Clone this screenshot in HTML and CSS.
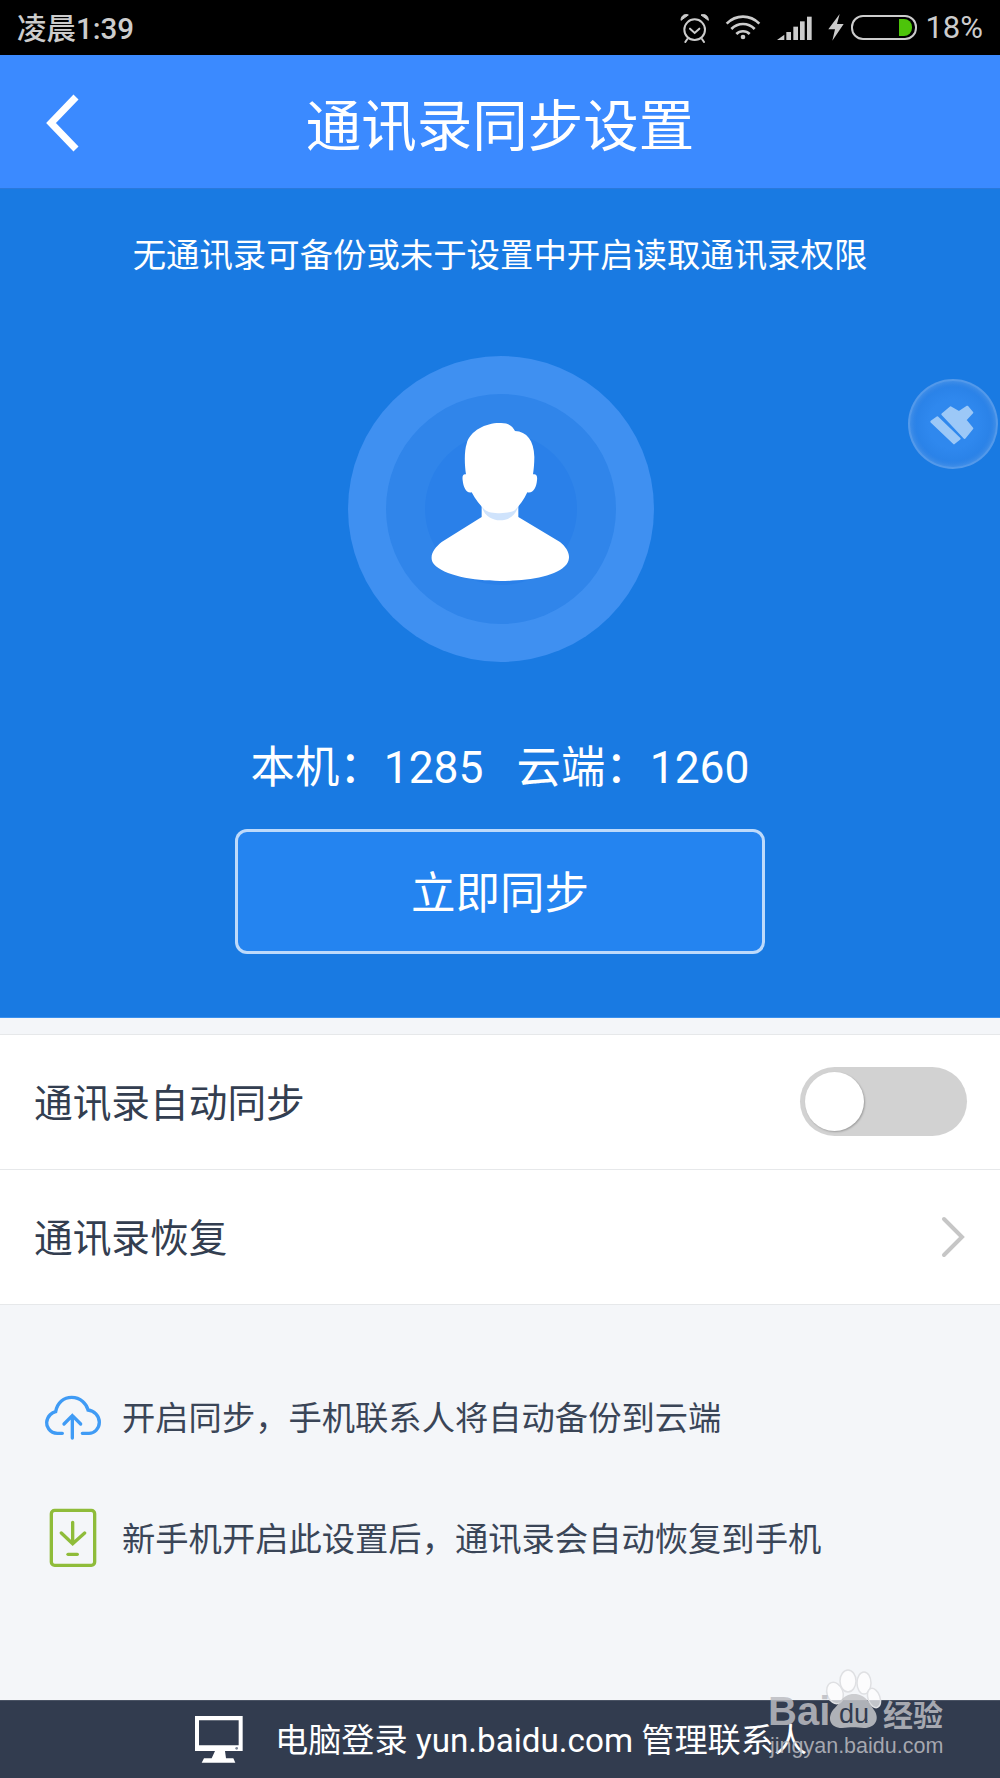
FILE: index.html
```html
<!DOCTYPE html>
<html lang="zh-CN">
<head>
    <meta charset="UTF-8">
    <meta name="viewport" content="width=device-width, initial-scale=1.0">
    <title>通讯录同步设置</title>
    <link rel="stylesheet" href="styles.css">
</head>
<body>
    <!-- Status bar -->
    <div class="status-bar">
        <span class="status-time">凌晨1:39</span>
        <div class="status-icons">
            <svg class="icon-alarm" width="30" height="30" viewBox="30 38 90 90" fill="none" stroke="#ccc" stroke-width="6">
                <circle cx="74" cy="88" r="31"/>
                <path d="M60 85 L74 98 L88 85" stroke-linecap="round"/>
                <path d="M33 60 C33 45 45 40 55 44 Z M115 60 C115 45 103 40 93 44 Z" fill="#ccc" stroke-width="3"/>
                <path d="M52 116 L46 125 M96 116 L102 125" stroke-linecap="round"/>
            </svg>
            <svg class="icon-wifi" width="36" height="25" viewBox="165 46 108 75" fill="none" stroke="#ccc" stroke-width="8">
                <path d="M170 72 C198 44 240 44 268 72"/>
                <path d="M184 88 C204 68 234 68 254 88"/>
                <path d="M199 103 C210 92 228 92 239 103"/>
                <circle cx="219" cy="112" r="7" fill="#ccc" stroke="none"/>
            </svg>
            <svg class="icon-signal" width="36" height="24" viewBox="322 48 108 72" fill="#ccc">
                <path d="M322 120 L344 104 V120 Z"/>
                <rect x="350" y="96" width="14" height="24"/>
                <rect x="371" y="80" width="14" height="40"/>
                <rect x="391" y="64" width="14" height="56"/>
                <rect x="412" y="50" width="14" height="70"/>
            </svg>
            <svg class="icon-bolt" width="16" height="27" viewBox="475 42 48 81" fill="#ccc">
                <path d="M510 42 L476 88 L496 88 L488 122 L522 72 L502 72 Z"/>
            </svg>
            <div class="battery"><div class="battery-level"></div></div>
            <span class="status-percent">18%</span>
        </div>
    </div>

    <!-- Title bar -->
    <header class="top-bar">
        <svg class="back-icon" width="34" height="58" viewBox="0 0 34 58" fill="none" stroke="#fff" stroke-width="7">
            <path d="M30 3 L5 29 L30 55"/>
        </svg>
        <h1>通讯录同步设置</h1>
    </header>

    <!-- Blue sync panel -->
    <section class="sync-panel">
        <p class="sync-note">无通讯录可备份或未于设置中开启读取通讯录权限</p>
        <div class="ring-outer">
            <div class="ring-middle">
                <div class="ring-inner">
                    <svg class="avatar" width="140" height="160" viewBox="300 245 420 480">
                        <path fill="#fff" d="M455 490 H565 V530 L690 605 C715 625 725 650 710 672 C680 710 590 722 510 722 C430 722 340 705 312 672 C295 650 310 625 335 605 L455 530 Z"/>
                        <path fill="#cfe3fc" d="M455 495 C465 555 555 555 565 495 Z"/>
                        <path fill="#fff" d="M510 248 C535 247 548 258 555 272 C590 274 612 300 613 350 C613 370 611 390 609 402 C618 400 623 405 621 420 C619 442 610 460 592 456 C582 478 568 496 556 508 C540 522 480 522 464 508 C452 496 436 478 425 456 C408 460 400 440 398 420 C396 405 400 400 408 402 C403 370 403 330 410 310 C420 270 470 247 510 248 Z"/>
                    </svg>
                </div>
            </div>
        </div>
        <p class="sync-count">本机&#xFF1A;1285&nbsp;&nbsp;&nbsp;云端&#xFF1A;1260</p>
        <button class="sync-btn" type="button"><span>立即同步</span></button>
    </section>

    <!-- Floating cleaner button -->
    <div class="float-tool">
        <svg width="90" height="90" viewBox="52 57 270 270" fill="#9cc8f7">
            <path d="M122 185 L140 172 L207 236 L190 250 Z" stroke="#9cc8f7" stroke-width="6" stroke-linejoin="round"/>
            <path d="M155 163 L180 142 L205 156 L230 140 L245 158 L224 180 L245 205 L222 234 Z" stroke="#9cc8f7" stroke-width="6" stroke-linejoin="round"/>
        </svg>
    </div>

    <!-- Settings list -->
    <div class="settings">
        <div class="setting-row">
            <span>通讯录自动同步</span>
            <div class="toggle"><div class="toggle-knob"></div></div>
        </div>
        <div class="setting-row">
            <span>通讯录恢复</span>
            <svg class="chevron" width="24" height="42" viewBox="0 0 24 42" fill="none" stroke="#c6c6c6" stroke-width="4" stroke-linecap="round">
                <path d="M3 3 L21 21 L3 39"/>
            </svg>
        </div>
    </div>

    <!-- Tips -->
    <div class="tips">
        <div class="tip">
            <svg class="tip-icon" width="58" height="47" viewBox="130 40 174 141" fill="none" stroke="#3f9bf5" stroke-width="10" stroke-linecap="round">
                <path d="M185 158 L170 158 C145 158 137 135 138 125 C140 105 155 95 165 93 C170 65 190 50 213 50 C240 50 258 70 262 88 C280 90 296 105 296 125 C296 145 280 158 265 158 L245 158"/>
                <path d="M215 172 V105 M190 130 L215 105 L240 130"/>
            </svg>
            <span>开启同步&#xFF0C;手机联系人将自动备份到云端</span>
        </div>
        <div class="tip">
            <svg class="tip-icon" width="58" height="60" viewBox="133 385 174 180" fill="none" stroke="#8fbc3a" stroke-width="10" stroke-linecap="round">
                <rect x="155" y="392" width="130" height="165" rx="10"/>
                <path d="M219 428 V490 M185 460 L219 492 L255 460"/>
                <path d="M205 524 H233"/>
            </svg>
            <span>新手机开启此设置后&#xFF0C;通讯录会自动恢复到手机</span>
        </div>
    </div>

    <!-- Footer -->
    <footer class="footer-bar">
        <svg class="monitor" width="48" height="47" viewBox="45 45 144 141">
            <path fill="#fff" fill-rule="evenodd" d="M45 45 H188 V150 H135 L138 172 H160 L166 185 H65 L72 172 H95 L105 150 H45 Z M57 58 V133 H176 V58 Z"/>
            <circle cx="170" cy="142" r="4" fill="#7b8494"/>
        </svg>
        <span>电脑登录 yun.baidu.com 管理联系人</span>
    </footer>

    <!-- Site watermark -->
    <svg class="watermark" width="210" height="110" viewBox="0 0 210 110">
        <g fill="#fff" fill-opacity="0.7" stroke="#dfe0e3" stroke-width="1.5">
            <ellipse cx="85" cy="33" rx="8" ry="11" transform="rotate(-20 85 33)"/>
            <ellipse cx="98" cy="21" rx="8" ry="11"/>
            <ellipse cx="114" cy="23" rx="7" ry="11"/>
            <ellipse cx="124" cy="38" rx="6" ry="10" transform="rotate(-20 124 38)"/>
        </g>
        <path d="M104 34 C116 34 120 44 124 50 C130 58 126 68 114 68 C106 67 100 67 92 68 C80 68 77 58 83 50 C90 44 92 34 104 34 Z" fill="#c4c5c9" fill-opacity="0.85"/>
        <text class="wm-bai" x="18" y="65">Bai</text>
        <text class="wm-du" x="89" y="63">du</text>
        <text class="wm-cn" x="133" y="66">经验</text>
        <text class="wm-url" x="20" y="93">jingyan.baidu.com</text>
    </svg>
</body>
</html>
```
FILE: styles.css
```css
* {
    box-sizing: border-box;
}

body {
    position: relative;
    width: 1000px;
    height: 1778px;
    margin: 0;
    overflow: hidden;
    background-color: #f4f6f9;
    font-family: Roboto, "Noto Sans CJK SC", sans-serif;
}

p, h1 {
    margin: 0;
    font-weight: normal;
}

.status-bar {
    display: flex;
    justify-content: space-between;
    align-items: center;
    height: 55px;
    padding: 0 17px;
    background-color: #000;
    color: #ccc;
    font-size: 29.5px;
}

.status-time {
    padding-bottom: 4px;
    font-weight: 500;
}

.status-icons {
    display: flex;
    align-items: center;
}

.icon-wifi {
    margin-left: 15px;
}

.icon-signal {
    margin-left: 16px;
}

.icon-bolt {
    margin-left: 15px;
}

.battery {
    display: flex;
    justify-content: flex-end;
    width: 66px;
    height: 25px;
    margin-left: 7px;
    padding: 2px 3px 2px 0;
    border: 2px solid #ccc;
    border-radius: 12px;
}

.battery-level {
    width: 13px;
    background-color: #4dc40a;
    border-radius: 0 8px 8px 0;
}

.status-percent {
    margin-left: 8px;
    font-size: 31px;
}

.top-bar {
    position: relative;
    display: flex;
    justify-content: center;
    align-items: center;
    height: 134px;
    background-color: #3b8aff;
    border-bottom: 1px solid #2a78dc;
}

.top-bar h1 {
    color: #fff;
    font-size: 55.5px;
}

.back-icon {
    position: absolute;
    left: 46px;
    top: 39px;
}

.sync-panel {
    display: flex;
    flex-direction: column;
    align-items: center;
    height: 829px;
    padding-top: 45px;
    background-color: #197ae2;
    border-bottom: 1px solid #3a90ee;
    color: #fff;
}

.sync-note {
    font-size: 33.4px;
    line-height: 44px;
}

.ring-outer,
.ring-middle,
.ring-inner {
    display: flex;
    justify-content: center;
    align-items: center;
    border-radius: 50%;
}

.ring-outer {
    width: 306px;
    height: 306px;
    margin-top: 78px;
    margin-left: 2px;
    background-color: #3f90f1;
}

.ring-middle {
    width: 230px;
    height: 230px;
    background-color: #3085ea;
}

.ring-inner {
    width: 152px;
    height: 152px;
    background-color: #2a80e9;
}

.avatar {
    flex-shrink: 0;
    margin-top: -14px;
    margin-right: 2px;
}

.sync-count {
    margin-top: 76px;
    font-size: 44.4px;
    line-height: 60px;
}

.sync-btn {
    width: 530px;
    height: 125px;
    margin-top: 31px;
    padding: 0;
    background-color: #2484f0;
    border: 3px solid rgba(255, 255, 255, 0.7);
    border-radius: 12px;
    color: #fff;
    font-family: inherit;
    font-size: 44.5px;
}

.sync-btn span {
    display: block;
    padding-bottom: 4px;
}

.float-tool {
    position: absolute;
    left: 908px;
    top: 379px;
    display: flex;
    width: 90px;
    height: 90px;
    border: 2px solid rgba(255, 255, 255, 0.2);
    border-radius: 50%;
    background: radial-gradient(circle, #2f88ee 40%, #2279de 100%);
    box-shadow: inset 0 0 6px rgba(255, 255, 255, 0.22);
    justify-content: center;
    align-items: center;
}

.float-tool svg {
    flex-shrink: 0;
}

.settings {
    margin-top: 16px;
    background-color: #fff;
    border-top: 1px solid #e6e8ea;
}

.setting-row {
    display: flex;
    justify-content: space-between;
    align-items: center;
    height: 135px;
    padding: 0 33px 0 34px;
    border-bottom: 1px solid #e6e8ea;
    color: #333e50;
    font-size: 38.7px;
}

.setting-row span {
    padding-bottom: 4px;
}

.toggle {
    display: flex;
    align-items: center;
    width: 167px;
    height: 69px;
    margin-bottom: 2px;
    padding-left: 5px;
    background-color: #d2d2d2;
    border-radius: 35px;
}

.toggle-knob {
    width: 59px;
    height: 59px;
    background-color: #fff;
    border-radius: 50%;
    box-shadow: 1px 1px 2px rgba(0, 0, 0, 0.25);
}

.chevron {
    margin-right: 2px;
}

.tips {
    display: flex;
    flex-direction: column;
    gap: 61px;
    padding: 82px 0 0 44px;
}

.tip {
    display: flex;
    align-items: center;
    gap: 20px;
    height: 60px;
    color: #3a4557;
    font-size: 33.3px;
}

.tip span {
    padding-bottom: 4px;
}

.footer-bar {
    position: absolute;
    left: 0;
    bottom: 0;
    display: flex;
    align-items: center;
    gap: 32px;
    width: 100%;
    height: 78px;
    padding-left: 195px;
    background-color: #323c4f;
    border-top: 1px solid #4a5364;
    color: #fff;
    font-size: 33.2px;
}

.footer-bar span {
    padding-bottom: 4px;
}

.watermark {
    position: absolute;
    left: 750px;
    top: 1660px;
}

.wm-bai {
    fill: #bcbdc2;
    fill-opacity: 0.85;
    font-family: "Liberation Sans", sans-serif;
    font-size: 40px;
    font-weight: bold;
}

.wm-du {
    fill: #323c4f;
    font-family: "Liberation Sans", sans-serif;
    font-size: 27px;
}

.wm-cn {
    fill: #bcbdc2;
    fill-opacity: 0.85;
    font-family: "Noto Sans CJK SC", sans-serif;
    font-size: 30px;
    font-weight: bold;
}

.wm-url {
    fill: #bcbdc2;
    fill-opacity: 0.85;
    font-family: "Liberation Sans", sans-serif;
    font-size: 21.5px;
}
```
